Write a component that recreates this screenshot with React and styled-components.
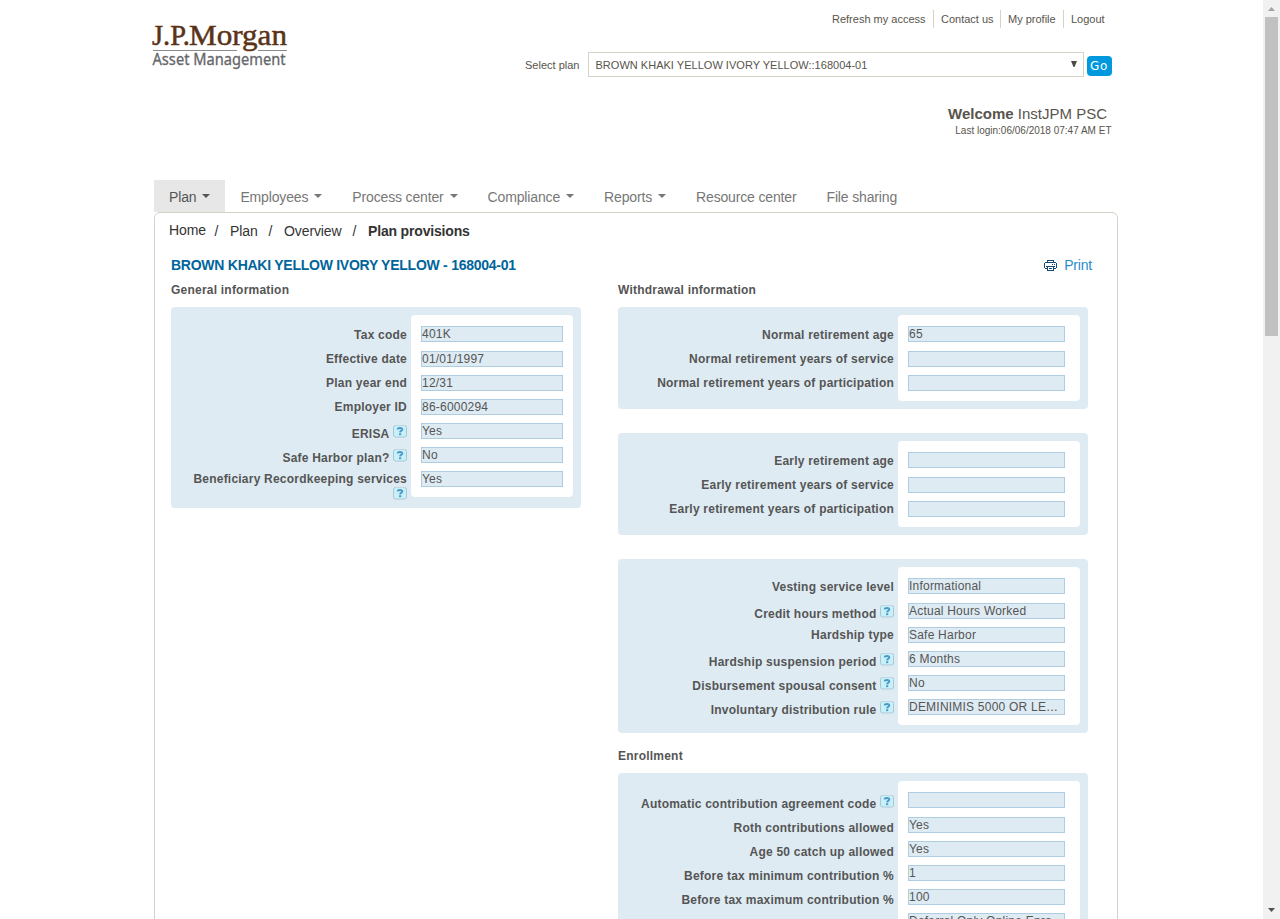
import React from "react";
import styled, { createGlobalStyle } from "styled-components";

const Global = createGlobalStyle`
  * { box-sizing: border-box; }
  body { margin: 0; background: #fff; overflow: hidden; color: #555; font-family: "Liberation Sans", Arial, sans-serif; }
`;

const Window = styled.div`
  display: flex; width: 1280px; height: 919px; overflow: hidden;
`;
const Page = styled.main`
  flex: 1; padding: 0 145px 0 154px; overflow: hidden;
`;
const Header = styled.header`
  height: 180px; display: flex; justify-content: space-between;
`;
const Logo = styled.svg`
  display: block; margin: 10px 0 0 -14px; flex: none; overflow: visible;
`;
const HeaderRight = styled.div`
  width: 600px; display: flex; flex-direction: column; align-items: flex-end; padding: 10px 6px 0 0;
`;
const LinkList = styled.nav`
  display: flex; height: 18px;
`;
const TopLink = styled.a`
  font-size: 11px; line-height: 18px; color: #58544c; white-space: nowrap;
  width: ${(p) => p.$w}px; padding-left: 7px;
  & + & { border-left: 1px solid #d5d3c8; }
`;
const PlanPicker = styled.div`
  display: flex; margin-top: 24px; height: 25px; font-size: 11px; color: #58544c;
`;
const PickerLabel = styled.label`
  width: 63px; line-height: 26px; white-space: nowrap;
`;
const PickerBox = styled.div`
  width: 496px; height: 25px; border: 1px solid #d5d3c8; padding: 0 6px 0 6.5px;
  display: flex; justify-content: space-between; line-height: 25px; letter-spacing: 0.02px;
`;
const PickerArrow = styled.svg`
  margin-top: 8px;
`;
const GoButton = styled.button`
  width: 25px; height: 20px; margin: 4px 0 0 3px; padding: 0 0 0 3px; border: 0; border-radius: 4px; background: #0099dd;
  color: #fff; font: 12px/20px "DejaVu Sans", Verdana, sans-serif; letter-spacing: 0.7px; text-align: left;
`;
const Welcome = styled.div`
  margin: 28px 5px 0 0; font-size: 15px; line-height: 18px; white-space: nowrap; color: #58544c;
`;
const LastLogin = styled.div`
  font-size: 10px; line-height: 12px; margin: 2px 0.5px 0 0; letter-spacing: 0; color: #58544c; white-space: nowrap;
`;

const Tabs = styled.nav`
  display: flex; height: 32px;
`;
const Tab = styled.a`
  display: flex; align-items: center; gap: 6px; padding: 2px 15px 0; font-size: 14px; white-space: nowrap; letter-spacing: -0.15px;
  color: ${(p) => (p.$active ? "#555" : "#777")}; background: ${(p) => (p.$active ? "#e7e7e7" : "transparent")};
`;
const Caret = styled.i`
  border: 4px solid transparent; border-top-color: currentColor; border-bottom: 0; margin-top: -3px;
`;
const Panel = styled.section`
  width: 964px; height: 800px; border: 1px solid #d5d3c8; border-radius: 6px; padding: 9px 25px 0 16px;
`;
const Crumbs = styled.div`
  display: flex; height: 18px; font-size: 14px; line-height: 18px; color: #333; margin-left: -2px; white-space: nowrap;
`;
const Crumb = styled.span`
  width: ${(p) => p.$w}px; margin-top: ${(p) => (p.$raised ? -1 : 0)}px; font-weight: ${(p) => (p.$current ? 700 : 400)};
  letter-spacing: ${(p) => (p.$current ? -0.17 : -0.1)}px;
`;
const TitleRow = styled.div`
  display: flex; justify-content: space-between; margin-top: 16px; height: 18px; line-height: 18px; font-size: 14px;
`;
const Title = styled.h1`
  margin: 0; font-size: 14px; color: #00659b; letter-spacing: -0.255px;
`;
const Print = styled.a`
  display: flex; gap: 7px; color: #2a8ccb; letter-spacing: -0.2px;
`;
const PrintIcon = styled.svg`
  margin-top: 4px;
`;
const Columns = styled.div`
  display: flex; justify-content: space-between; margin-top: 8px;
`;
const Column = styled.div`
  width: ${(p) => p.$w}px; margin-right: ${(p) => p.$gap || 0}px;
`;
const Heading = styled.h2`
  margin: ${(p) => p.$top || 0}px 0 0; height: 16px; line-height: 16px; font-size: 12px; letter-spacing: 0.22px; color: #555;
`;
const Card = styled.div`
  display: flex; margin-top: ${(p) => p.$top}px; padding: 0 8px 0 0; height: ${(p) => p.$h}px;
  background: #deebf3; border-radius: 4px;
`;
const Labels = styled.div`
  flex: 1; padding: 21px 4px 0 0;
`;
const LabelRow = styled.div`
  height: 24px; display: flex; flex-wrap: wrap; justify-content: flex-end; align-content: flex-start; align-items: flex-start;
  font-size: 12px; line-height: 14px; font-weight: 700; letter-spacing: 0.22px; white-space: nowrap;
`;
const LabelText = styled.span`
  margin-top: ${(p) => (p.$low ? 3 : 0)}px;
  flex-basis: ${(p) => (p.$full ? "100%" : "auto")}; text-align: right;
`;
const HelpIcon = styled.svg`
  margin: 1px 0 0 3.5px; flex: none;
`;
const Values = styled.div`
  width: ${(p) => p.$w}px; margin: 8px 0 ${(p) => p.$bottom}px; padding: 11px 0 0 10px; background: #fff; border-radius: 4px;
`;
const Field = styled.div`
  width: ${(p) => p.$w}px; height: 16px; border: 1px solid #aecde2; background: #deebf3; margin-bottom: 8px;
  font-size: 12px; line-height: 14px; letter-spacing: 0.22px; color: #555;
  overflow: hidden; white-space: nowrap;
  &:first-child { margin-bottom: 9px; }
`;

const ScrollTrack = styled.aside`
  width: 17px; background: #f1f1f1; display: flex; flex-direction: column; align-items: center;
`;
const ScrollThumb = styled.div`
  width: 13px; height: 319px; background: #c1c1c1; margin-bottom: auto;
`;
const ScrollArrow = styled.svg`
  display: block; width: 17px; height: 17px; flex: none;
`;

function Help() {
  return (
    <HelpIcon width="14" height="13" viewBox="0 0 14 13">
      <rect x="0.5" y="0.5" width="13" height="11.5" rx="2" fill="#c9eff8" stroke="#a9c8d6" />
      <path d="M2 .5H12" stroke="#c3d8e0" />
      <path d="M4.7 4.4C4.9 2.4 9.3 2.3 9.3 4.5C9.3 5.8 7.2 5.8 7.1 7.4" fill="none" stroke="#4c9aca" strokeWidth="2" />
      <rect x="6" y="8.3" width="2.2" height="1.8" fill="#4c9aca" />
    </HelpIcon>
  );
}

function FieldCard({ rows, height, top = 9, wide, bottom = 8 }) {
  return (
    <Card $h={height} $top={top}>
      <Labels>
        {rows.map(([label, , mode], i) => (
          <LabelRow key={i}>
            <LabelText $low={mode === "help" || mode === "low"} $full={mode === "wrap"}>{label}</LabelText>
            {(mode === "help" || mode === "wrap") && <Help />}
          </LabelRow>
        ))}
      </Labels>
      <Values $w={wide ? 182 : 162} $bottom={bottom}>
        {rows.map(([, value], i) => (
          <Field key={i} $w={wide ? 157 : 142}>{value}</Field>
        ))}
      </Values>
    </Card>
  );
}

const general = [
  ["Tax code", "401K"],
  ["Effective date", "01/01/1997"],
  ["Plan year end", "12/31"],
  ["Employer ID", "86-6000294"],
  ["ERISA", "Yes", "help"],
  ["Safe Harbor plan?", "No", "help"],
  ["Beneficiary Recordkeeping services", "Yes", "wrap"],
];
const normal = [
  ["Normal retirement age", "65"],
  ["Normal retirement years of service", ""],
  ["Normal retirement years of participation", ""],
];
const early = [
  ["Early retirement age", ""],
  ["Early retirement years of service", ""],
  ["Early retirement years of participation", ""],
];
const vesting = [
  ["Vesting service level", "Informational"],
  ["Credit hours method", "Actual Hours Worked", "help"],
  ["Hardship type", "Safe Harbor"],
  ["Hardship suspension period", "6 Months", "help"],
  ["Disbursement spousal consent", "No", "help"],
  ["Involuntary distribution rule", "DEMINIMIS 5000 OR LE…", "help"],
];
const enrollment = [
  ["Automatic contribution agreement code", "", "help"],
  ["Roth contributions allowed", "Yes", "low"],
  ["Age 50 catch up allowed", "Yes", "low"],
  ["Before tax minimum contribution %", "1", "low"],
  ["Before tax maximum contribution %", "100", "low"],
  ["", "Deferral Only Online Enro…"],
];
const tabs = [
  ["Plan", true], ["Employees", true], ["Process center", true], ["Compliance", true],
  ["Reports", true], ["Resource center", false], ["File sharing", false],
];

export default function App() {
  return (
    <Window>
      <Global />
      <Page>
        <Header>
          <Logo width="160" height="70" viewBox="0 0 160 70">
            <g fontFamily="Liberation Serif, serif" fontSize="30" fill="#5a3317" stroke="#5a3317" strokeWidth="0.5">
              <text x="12" y="35" textLength="38" lengthAdjust="spacingAndGlyphs">J.P.</text>
              <text x="49" y="35" textLength="98" lengthAdjust="spacingAndGlyphs">Morgan</text>
            </g>
            <path d="M13 40.5H97M118 40.5H147" stroke="#8b8b8b" />
            <text x="12.5" y="55" fontFamily="Noto Sans, sans-serif" fontSize="15.5" fill="#66676a" stroke="#66676a" strokeWidth="0.3" textLength="133" lengthAdjust="spacingAndGlyphs">Asset Management</text>
          </Logo>
          <HeaderRight>
            <LinkList>
              <TopLink $w={108}>Refresh my access</TopLink>
              <TopLink $w={67}>Contact us</TopLink>
              <TopLink $w={63}>My profile</TopLink>
              <TopLink $w={49}>Logout</TopLink>
            </LinkList>
            <PlanPicker>
              <PickerLabel>Select plan</PickerLabel>
              <PickerBox>
                <span>BROWN KHAKI YELLOW IVORY YELLOW::168004-01</span>
                <PickerArrow width="6" height="6" viewBox="0 0 6 6"><path d="M0 0H6L3.5 6H2.5Z" fill="#4d4a43" /></PickerArrow>
              </PickerBox>
              <GoButton>Go</GoButton>
            </PlanPicker>
            <Welcome><b>Welcome</b> InstJPM PSC</Welcome>
            <LastLogin>Last login:06/06/2018 07:47 AM ET</LastLogin>
          </HeaderRight>
        </Header>
        <Tabs>
          {tabs.map(([name, menu], i) => (
            <Tab key={name} $active={i === 0}>{name}{menu && <Caret />}</Tab>
          ))}
        </Tabs>
        <Panel>
          <Crumbs>
            <Crumb $w={45.5} $raised>Home</Crumb>
            <Crumb $w={15.5}>/</Crumb>
            <Crumb $w={38.5}>Plan</Crumb>
            <Crumb $w={15.5}>/</Crumb>
            <Crumb $w={68.5}>Overview</Crumb>
            <Crumb $w={15.5}>/</Crumb>
            <Crumb $w={110} $current>Plan provisions</Crumb>
          </Crumbs>
          <TitleRow>
            <Title>BROWN KHAKI YELLOW IVORY YELLOW - 168004-01</Title>
            <Print>
              <PrintIcon width="13" height="12" viewBox="0 0 13 12" shapeRendering="crispEdges" fill="#174a70">
                <path d="M3 0H10V1H3ZM3 1H4V3H3ZM9 1H10V3H9ZM1 2H12V3H1ZM0 3H1V8H0ZM12 3H13V8H12ZM8 4H9V5H8ZM10 4H11V5H10ZM2 6H11V7H2ZM1 8H4V9H1ZM9 8H12V9H9ZM3 7H4V11H3ZM9 7H10V11H9ZM5 8H8V9H5ZM3 10H10V11H3Z" />
              </PrintIcon>
              Print
            </Print>
          </TitleRow>
          <Columns>
            <Column $w={410}>
              <Heading>General information</Heading>
              <FieldCard rows={general} height={201} bottom={11} />
            </Column>
            <Column $w={470} $gap={4}>
              <Heading>Withdrawal information</Heading>
              <FieldCard wide rows={normal} height={102} />
              <FieldCard wide rows={early} height={102} top={24} />
              <FieldCard wide rows={vesting} height={174} top={24} />
              <Heading $top={15}>Enrollment</Heading>
              <FieldCard wide rows={enrollment} height={260} />
            </Column>
          </Columns>
        </Panel>
      </Page>
      <ScrollTrack>
        <ScrollArrow viewBox="0 0 17 17"><path d="M5 11L8.5 7L12 11Z" fill="#a3a3a3" /></ScrollArrow>
        <ScrollThumb />
        <ScrollArrow viewBox="0 0 17 17"><path d="M5 6L8.5 10L12 6Z" fill="#505050" /></ScrollArrow>
      </ScrollTrack>
    </Window>
  );
}
